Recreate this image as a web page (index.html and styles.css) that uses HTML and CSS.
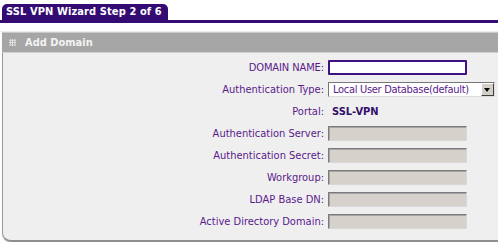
FILE: index.html
```html
<!DOCTYPE html>
<html lang="en">
<head>
    <meta charset="UTF-8">
    <title>SSL VPN Wizard</title>
<link rel="stylesheet" href="styles.css">
</head>
<body>
    <div class="tabbar">
        <div class="tab">SSL VPN Wizard Step 2 of 6</div>
    </div>
    <div class="rule"></div>
    <div class="panel">
        <div class="panel-head">
            <span class="grip"></span>
            <span class="title">Add Domain</span>
        </div>
        <div class="form">
            <label class="caps">DOMAIN NAME:</label>
            <div><input type="text" class="field active"></div>

            <label>Authentication Type:</label>
            <div>
                <div class="select">
                    <span class="select-text">Local User Database(default)</span>
                    <span class="select-btn"></span>
                </div>
            </div>

            <label>Portal:</label>
            <div class="value">SSL-VPN</div>

            <label>Authentication Server:</label>
            <div><input type="text" class="field" disabled></div>

            <label>Authentication Secret:</label>
            <div><input type="text" class="field" disabled></div>

            <label>Workgroup:</label>
            <div><input type="text" class="field" disabled></div>

            <label>LDAP Base DN:</label>
            <div><input type="text" class="field" disabled></div>

            <label>Active Directory Domain:</label>
            <div><input type="text" class="field" disabled></div>
        </div>
    </div>
</body>
</html>
```

FILE: styles.css
```css
*{
    margin: 0;
    padding: 0;
    box-sizing: border-box;
}
body{
    background: #fff;
    font-family: "DejaVu Sans Condensed", "DejaVu Sans", sans-serif;
    font-size: 11px;
    overflow: hidden;
}
.tabbar{
    padding-top: 4px;
    padding-left: 2px;
    border-bottom: 3px solid #330b73;
    display: flex;
}
.tab{
    background: #330b73;
    color: #fff;
    font-weight: bold;
    font-size: 11px;
    height: 16px;
    line-height: 16px;
    padding: 0 6px 0 4px;
    letter-spacing: 0.1px;
    border-radius: 5px 5px 0 0;
}
.rule{
    height: 9px;
    border-bottom: 1px solid #ececec;
}
.panel{
    margin-left: 2px;
    background: #efefef;
    border-left: 1px solid #9a9a9a;
    border-bottom: 2px solid #8f8f8f;
    border-radius: 0 0 0 9px;
    box-shadow: 0 1px 1px #d0d0d0;
    height: 210px;
}
.panel-head{
    height: 21px;
    margin-left: -1px;
    background: #a6a6a6;
    border-top: 1px solid #c9c9c9;
    border-bottom: 1px solid #cfcfcf;
    display: flex;
    align-items: center;
    padding-left: 7px;
}
.grip{
    width: 7px;
    height: 7px;
    background:
        radial-gradient(circle, #e8e8e8 0.8px, transparent 1px) 0 0 / 2.4px 2.4px;
    margin-right: 9px;
}
.title{
    color: #f2f2f2;
    font-weight: bold;
    font-size: 11px;
}
.form{
    display: grid;
    grid-template-columns: 321px 1fr;
    grid-auto-rows: 22px;
    column-gap: 4px;
    padding-top: 3px;
    align-items: center;
}
.form label{
    text-align: right;
    color: #5a1a8c;
    white-space: nowrap;
}
.form label.caps{
    letter-spacing: -0.1px;
}
.field{
    display: block;
    width: 139px;
    height: 15px;
    border: 1px solid #7a7a7a;
    border-right-color: #d8d8d8;
    border-bottom-color: #d8d8d8;
    background: #d6d2cb;
    box-shadow: inset 1px 1px 0 #a5a5a5;
    outline: none;
}
.field.active{
    background: #fff;
    border: 2px solid #3e1280;
    border-radius: 1px;
    box-shadow: none;
}
.select{
    width: 167px;
    height: 15px;
    display: flex;
    border: 1px solid #777;
    border-right-color: #ddd;
    border-bottom-color: #ddd;
    background: #fff;
}
.select-text{
    flex: 1;
    color: #5a1a8c;
    font-size: 11px;
    line-height: 13px;
    padding-left: 4px;
    letter-spacing: -0.3px;
    white-space: nowrap;
    overflow: hidden;
}
.select-btn{
    width: 13px;
    height: 13px;
    background: #d4d0c8;
    border: 1px solid;
    border-color: #fff #404040 #404040 #fff;
    position: relative;
}
.select-btn::after{
    content: "";
    position: absolute;
    left: 2px;
    top: 4px;
    border-left: 3.5px solid transparent;
    border-right: 3.5px solid transparent;
    border-top: 4px solid #000;
}
.value{
    color: #33106a;
    font-weight: bold;
    padding-left: 4px;
}
```
